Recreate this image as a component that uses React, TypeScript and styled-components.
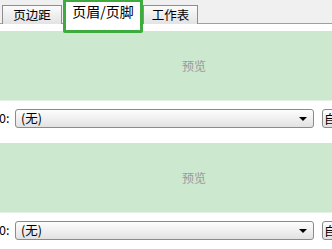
import React from 'react';
import styled, { createGlobalStyle } from 'styled-components';

const GlobalStyle = createGlobalStyle`
  html, body {
    margin: 0;
    padding: 0;
    background: #ffffff;
    overflow: hidden;
  }
  body {
    font-family: "Noto Sans CJK SC", "Liberation Sans", sans-serif;
    color: #000000;
  }
`;

const Page = styled.div`
  width: 332px;
  height: 249px;
  overflow: hidden;
  background: #ffffff;
`;

const TabStrip = styled.div`
  display: flex;
  align-items: flex-end;
  height: 24px;
  background: #f0f0f0;
  border-bottom: 1px solid #a0a0a0;
  box-sizing: border-box;
  padding-left: 2px;
`;

const Tab = styled.div<{ $active?: boolean; $width: number }>`
  box-sizing: border-box;
  flex-shrink: 0;
  width: ${(p) => p.$width}px;
  display: flex;
  align-items: center;
  justify-content: center;
  font-size: ${(p) => (p.$active ? 14 : 12.5)}px;
  line-height: 1;
  position: relative;
  ${(p) =>
    p.$active
      ? `
    height: 34px;
    margin-bottom: -10px;
    margin-left: 1px;
    background: #ffffff;
    border: 3px solid #3dab3d;
    border-radius: 2px;
    padding-bottom: 10px;
    z-index: 1;
  `
      : `
    height: 19px;
    margin-bottom: -1px;
    background: linear-gradient(#fbfbfb, #e3e3e3);
    border: 1px solid #8e8e8e;
    border-bottom: none;
    padding-top: 1px;
  `}
`;

const Body = styled.div`
  display: flex;
  flex-direction: column;
  padding-top: 7px;
`;

const Preview = styled.div<{ $top: number }>`
  margin-top: ${(p) => p.$top}px;
  height: 69px;
  background: #cce8cf;
  border-bottom: 1px solid #e6f1e6;
  display: flex;
  align-items: center;
  justify-content: center;
  padding-left: 56px;
  font-size: 12px;
  color: #9a9a9a;
`;

const Row = styled.div`
  display: flex;
  align-items: center;
  height: 19px;
  margin-top: 8px;
`;

const Label = styled.span`
  flex-shrink: 0;
  width: 16px;
  font-size: 12.5px;
  line-height: 1;
  margin-left: -1px;
`;

const Select = styled.div`
  box-sizing: border-box;
  flex-shrink: 0;
  width: 299px;
  height: 19px;
  border: 1px solid #8a8a8a;
  border-radius: 3px;
  background: linear-gradient(#fdfdfd, #e2e2e2);
  display: flex;
  align-items: center;
  padding-left: 5px;
  padding-right: 5px;
  font-size: 12.5px;
`;

const Value = styled.span`
  flex: 1;
  line-height: 1;
`;

const Arrow = styled.span`
  width: 0;
  height: 0;
  border-left: 4px solid transparent;
  border-right: 4px solid transparent;
  border-top: 4px solid #000000;
  margin-right: 1px;
`;

const SideButton = styled.div`
  box-sizing: border-box;
  flex-shrink: 0;
  margin-left: 8px;
  width: 24px;
  height: 19px;
  border: 1px solid #8a8a8a;
  border-radius: 3px;
  background: linear-gradient(#fdfdfd, #e2e2e2);
  font-size: 12.5px;
  line-height: 17px;
  padding-left: 1px;
`;

const Section = ({ top }: { top: number }) => (
  <>
    <Preview $top={top}>预览</Preview>
    <Row>
      <Label>0:</Label>
      <Select>
        <Value>(无)</Value>
        <Arrow />
      </Select>
      <SideButton>自</SideButton>
    </Row>
  </>
);

export default function App() {
  return (
    <Page>
      <GlobalStyle />
      <TabStrip>
        <Tab $width={60}>页边距</Tab>
        <Tab $width={80} $active>
          页眉/页脚
        </Tab>
        <Tab $width={55}>工作表</Tab>
      </TabStrip>
      <Body>
        <Section top={0} />
        <Section top={15} />
      </Body>
    </Page>
  );
}
